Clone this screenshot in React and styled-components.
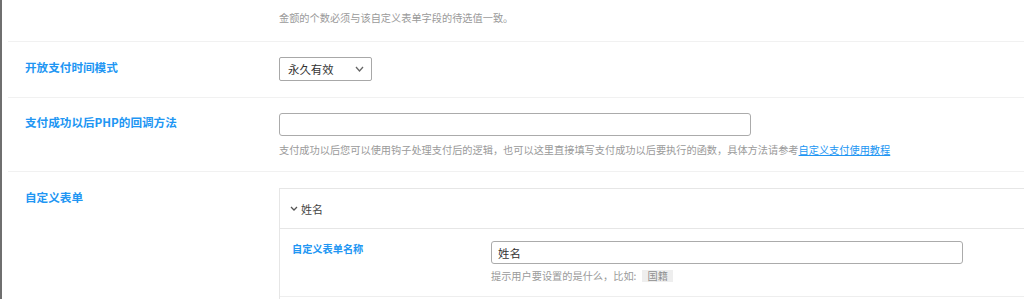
import React from 'react';
import styled, { createGlobalStyle } from 'styled-components';

const GlobalStyle = createGlobalStyle`
	html, body {
		margin: 0;
		background: #fff;
		overflow: hidden;
	}

	body {
		font-family: 'Noto Sans CJK SC', 'Noto Sans', sans-serif;
	}
`;

const Page = styled.div`
	border-left: 2px solid #6f6f6f;
	min-height: 100vh;
	padding-left: 6px;
	box-sizing: border-box;
`;

const Row = styled.div`
	display: flex;
	border-bottom: ${(p) => (p.$last ? 'none' : '1px solid #f1f1f1')};
	padding: ${(p) => p.$pad};
`;

const Label = styled.div`
	flex: 0 0 271px;
	box-sizing: border-box;
	padding-left: 17px;
	color: #2196f3;
	font-size: 11.6px;
	font-weight: bold;
	line-height: ${(p) => p.$lh || '19px'};
`;

const Field = styled.div`
	flex: 1;
	min-width: 0;
`;

const Desc = styled.div`
	color: #9a9a9a;
	font-size: 10.2px;
	line-height: 16px;
	margin-top: ${(p) => p.$mt || '0'};

	a {
		color: #2196f3;
		text-decoration: underline;
	}
`;

const Select = styled.div`
	display: flex;
	align-items: center;
	justify-content: space-between;
	width: 93px;
	height: 24px;
	box-sizing: border-box;
	padding: 0 7px 0 8px;
	border: 1px solid #a8a8a8;
	border-radius: 2px;
	color: #333;
	font-size: 11.4px;
`;

const Input = styled.input`
	display: block;
	width: ${(p) => p.$w};
	height: 23px;
	box-sizing: border-box;
	margin: 0;
	padding: 0 6px;
	border: 1px solid #ababab;
	border-radius: 3px;
	font-family: inherit;
	font-size: 11.4px;
	color: #333;
	outline: none;
`;

const Panel = styled.div`
	border: 1px solid #e6e6e6;
	border-right: none;
	padding-bottom: 20px;
`;

const PanelHeader = styled.div`
	display: flex;
	align-items: center;
	gap: 3px;
	height: 39px;
	padding: 0 10px;
	border-bottom: 1px solid #e6e6e6;
	color: #444;
	font-size: 11px;
`;

const SubRow = styled.div`
	display: flex;
	padding: 12px;
	border-bottom: 1px solid #eee;
`;

const SubLabel = styled.div`
	flex: 0 0 199px;
	color: #2196f3;
	font-size: 10.2px;
	font-weight: bold;
	line-height: 15px;
`;

const Tag = styled.span`
	display: inline-block;
	margin-left: 6px;
	padding: 0 5px;
	background: #eee;
	color: #8f8f8f;
	line-height: 12px;
`;

const Chevron = ({ w = 7, h = 4, color = '#666' }) => (
	<svg width={w + 2} height={h + 2} viewBox={`-1 -1 ${w + 2} ${h + 2}`}>
		<polyline
			points={`0,0 ${w / 2},${h} ${w},0`}
			fill='none'
			stroke={color}
			strokeWidth='1.3'
		/>
	</svg>
);

export default function App() {
	return (
		<>
			<GlobalStyle />
			<Page>
				<Row $pad='10px 0 15px'>
					<Label />
					<Field>
						<Desc>金额的个数必须与该自定义表单字段的待选值一致。</Desc>
					</Field>
				</Row>

				<Row $pad='15px 0 16px'>
					<Label $lh='20px'>开放支付时间模式</Label>
					<Field>
						<Select>
							永久有效
							<Chevron />
						</Select>
					</Field>
				</Row>

				<Row $pad='15px 0 13px'>
					<Label $lh='18px'>支付成功以后PHP的回调方法</Label>
					<Field>
						<Input $w='472px' defaultValue='' />
						<Desc $mt='6px'>
							支付成功以后您可以使用钩子处理支付后的逻辑，也可以这里直接填写支付成功以后要执行的函数，具体方法请参考
							<a href='#'>自定义支付使用教程</a>
						</Desc>
					</Field>
				</Row>

				<Row $pad='16px 0 0' $last>
					<Label $lh='18px'>自定义表单</Label>
					<Field>
						<Panel>
							<PanelHeader>
								<Chevron w={6} h={3} color='#555' />
								姓名
							</PanelHeader>
							<SubRow>
								<SubLabel>自定义表单名称</SubLabel>
								<div>
									<Input $w='472px' defaultValue='姓名' />
									<Desc $mt='4px'>
										提示用户要设置的是什么，比如:
										<Tag>国籍</Tag>
									</Desc>
								</div>
							</SubRow>
						</Panel>
					</Field>
				</Row>
			</Page>
		</>
	);
}
